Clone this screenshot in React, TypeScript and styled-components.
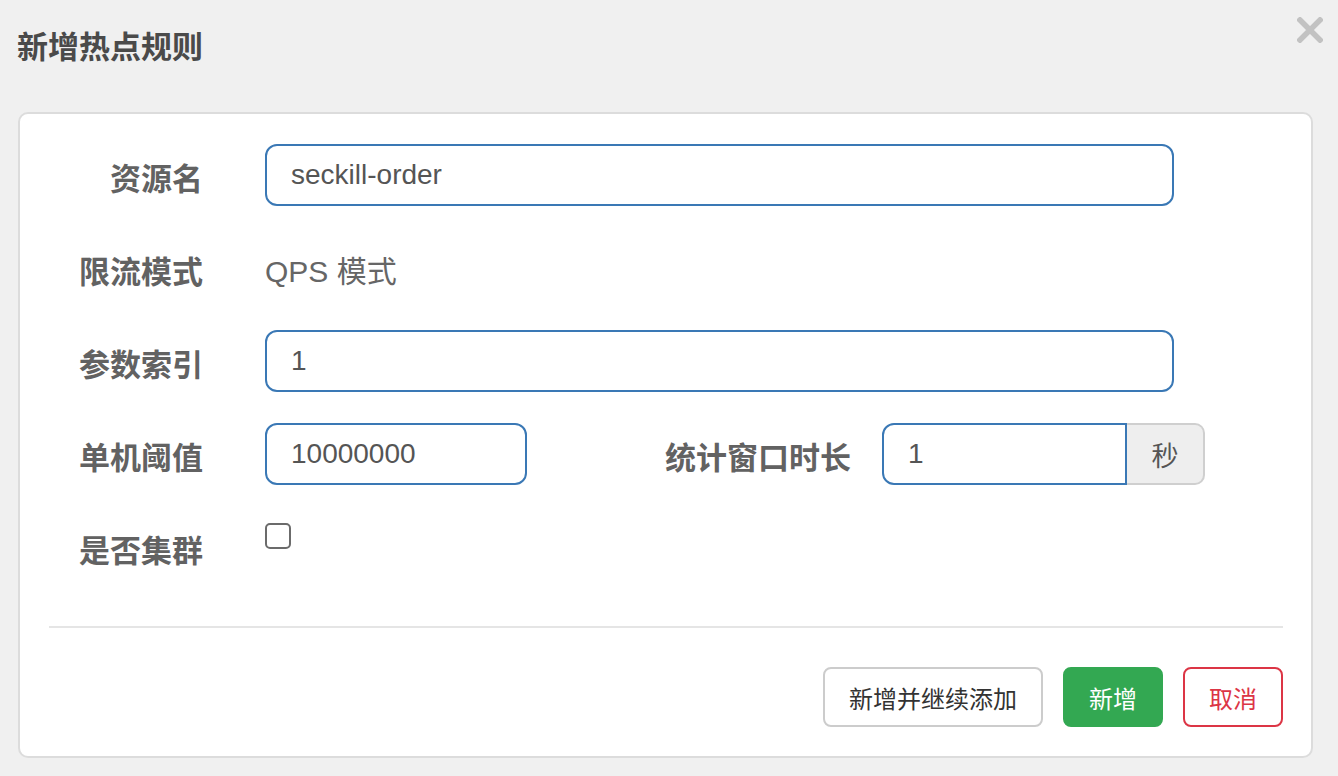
import React from 'react'
import styled, { createGlobalStyle } from 'styled-components'

const GlobalStyle = createGlobalStyle`
    html, body {
        margin: 0;
        padding: 0;
        background: #f0f0f0;
    }
    body {
        font-family: "Liberation Sans", "Noto Sans CJK SC", sans-serif;
    }
`

const Page = styled.div`
    width: 1338px;
    min-height: 776px;
    box-sizing: border-box;
    background: #f0f0f0;
    padding-bottom: 18px;
`

const Header = styled.div`
    height: 112px;
    box-sizing: border-box;
    padding: 30px 15px 0 17px;
    display: flex;
    align-items: flex-start;
    justify-content: space-between;
`

const Title = styled.h4`
    margin: 0;
    font-size: 31px;
    line-height: 36px;
    font-weight: 700;
    color: #4a4a4a;
`

const CloseButton = styled.button`
    margin-top: -13px;
    width: 26px;
    height: 26px;
    padding: 0;
    border: none;
    background: none;
    cursor: pointer;
    svg {
        display: block;
    }
`

const Card = styled.div`
    margin: 0 25px 0 18px;
    background: #fff;
    border: 2px solid #dcdcdc;
    border-radius: 10px;
    padding: 30px 28px 29px 29px;
`

const Form = styled.div`
    display: flex;
    flex-direction: column;
    gap: 31px;
`

const Row = styled.div`
    display: grid;
    grid-template-columns: 154px 1fr;
    column-gap: 62px;
    height: 62px;
`

const Label = styled.label<{ $width?: number }>`
    height: 62px;
    box-sizing: border-box;
    text-align: right;
    font-size: 31px;
    font-weight: 700;
    line-height: 52px;
    padding-top: 10px;
    color: #626262;
    white-space: nowrap;
    ${({ $width }) => $width ? `width: ${$width}px; flex: none;` : ''}
`

const Field = styled.div`
    display: flex;
    align-items: flex-start;
`

const TextInput = styled.input<{ $width: number; $group?: boolean }>`
    width: ${({ $width }) => $width}px;
    height: 62px;
    box-sizing: border-box;
    border: 2px solid #3a78b5;
    border-radius: ${({ $group }) => $group ? '12px 0 0 12px' : '12px'};
    padding: 0 24px;
    font-family: inherit;
    font-size: 28px;
    color: #555;
    background: #fff;
    outline: none;
`

const StaticText = styled.div`
    font-size: 30px;
    line-height: 54px;
    padding-top: 8px;
    color: #666;
`

const SubLabel = styled(Label)`
    margin-right: 31px;
`

const InputGroup = styled.div`
    display: flex;
`

const Addon = styled.span`
    width: 78px;
    height: 62px;
    box-sizing: border-box;
    border: 2px solid #cfcfcf;
    border-left: none;
    border-radius: 0 10px 10px 0;
    background: #eee;
    display: flex;
    align-items: center;
    justify-content: center;
    font-size: 27px;
    color: #555;
`

const Checkbox = styled.input`
    appearance: none;
    margin: 7px 0 0;
    width: 26px;
    height: 26px;
    box-sizing: border-box;
    border: 2px solid #6b6b6b;
    border-radius: 5px;
    background: #fff;
`

const Divider = styled.hr`
    margin: 48px 0 0;
    border: none;
    border-top: 2px solid #e5e5e5;
`

const Footer = styled.div`
    display: flex;
    justify-content: flex-end;
    gap: 20px;
    margin-top: 39px;
`

const Button = styled.button<{ $variant: 'default' | 'success' | 'danger'; $width: number }>`
    width: ${({ $width }) => $width}px;
    height: 60px;
    border-radius: 8px;
    border: 2px solid;
    font-family: inherit;
    font-size: 24px;
    cursor: pointer;
    ${({ $variant }) => {
        if ($variant === 'success') return 'background: #33a852; border-color: #33a852; color: #fff;'
        if ($variant === 'danger') return 'background: #fff; border-color: #dc3545; color: #dc3545;'
        return 'background: #fff; border-color: #cccccc; color: #333;'
    }}
`

const App = () => {
    return (
        <Page>
            <GlobalStyle />
            <Header>
                <Title>新增热点规则</Title>
                <CloseButton aria-label="close">
                    <svg width="26" height="26" viewBox="0 0 26 26">
                        <path d="M3 3 L23 23 M23 3 L3 23" stroke="#c2c2c2" strokeWidth="5.5" strokeLinecap="square" />
                    </svg>
                </CloseButton>
            </Header>
            <Card>
                <Form>
                    <Row>
                        <Label>资源名</Label>
                        <Field><TextInput $width={909} defaultValue="seckill-order" /></Field>
                    </Row>
                    <Row>
                        <Label>限流模式</Label>
                        <StaticText>QPS 模式</StaticText>
                    </Row>
                    <Row>
                        <Label>参数索引</Label>
                        <Field><TextInput $width={909} defaultValue="1" /></Field>
                    </Row>
                    <Row>
                        <Label>单机阈值</Label>
                        <Field>
                            <TextInput $width={262} defaultValue="10000000" />
                            <SubLabel $width={324}>统计窗口时长</SubLabel>
                            <InputGroup>
                                <TextInput $width={245} $group defaultValue="1" />
                                <Addon>秒</Addon>
                            </InputGroup>
                        </Field>
                    </Row>
                    <Row>
                        <Label>是否集群</Label>
                        <Field><Checkbox type="checkbox" /></Field>
                    </Row>
                </Form>
                <Divider />
                <Footer>
                    <Button $variant="default" $width={220}>新增并继续添加</Button>
                    <Button $variant="success" $width={100}>新增</Button>
                    <Button $variant="danger" $width={100}>取消</Button>
                </Footer>
            </Card>
        </Page>
    )
}

export default App
